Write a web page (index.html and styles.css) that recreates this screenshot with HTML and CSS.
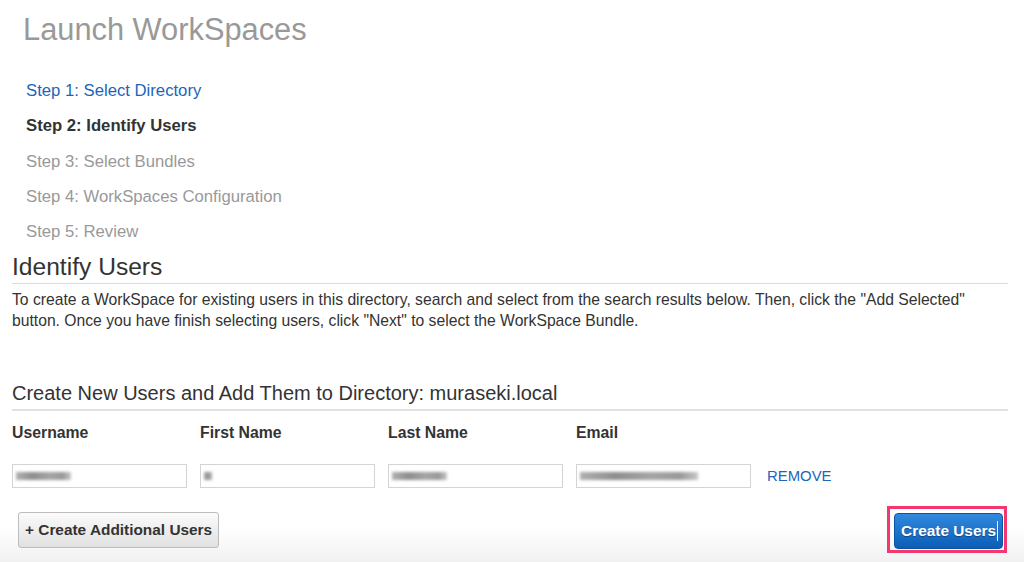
FILE: index.html
```html
<!DOCTYPE html>
<html>
<head>
<meta charset="utf-8">
<link rel="stylesheet" href="styles.css">
</head>
<body>
<div class="page">
  <h1 class="title">Launch WorkSpaces</h1>
  <ul class="steps">
    <li class="step done">Step 1: Select Directory</li>
    <li class="step current">Step 2: Identify Users</li>
    <li class="step">Step 3: Select Bundles</li>
    <li class="step">Step 4: WorkSpaces Configuration</li>
    <li class="step">Step 5: Review</li>
  </ul>
  <div class="section">
    <h2 class="section-title">Identify Users</h2>
    <p class="intro">To create a WorkSpace for existing users in this directory, search and select from the search results below. Then, click the "Add Selected" button. Once you have finish selecting users, click "Next" to select the WorkSpace Bundle.</p>
    <h3 class="sub-title">Create New Users and Add Them to Directory: muraseki.local</h3>
    <div class="grid">
      <div class="col-head">Username</div>
      <div class="col-head">First Name</div>
      <div class="col-head">Last Name</div>
      <div class="col-head">Email</div>
      <div></div>
      <div class="field"><span class="blur b-user"></span></div>
      <div class="field"><span class="blur b-first"></span></div>
      <div class="field"><span class="blur b-last"></span></div>
      <div class="field"><span class="blur b-email"></span></div>
      <a class="remove">REMOVE</a>
    </div>
    <div class="actions">
      <button class="btn-secondary">+ Create Additional Users</button>
      <div class="highlight">
        <button class="btn-primary">Create Users<span class="caret"></span></button>
      </div>
    </div>
  </div>
</div>
</body>
</html>
```
FILE: styles.css
```css
html {
  height: 100%;
}
body {
  margin: 0;
  min-height: 100%;
  font-family: "Liberation Sans", Arial, Helvetica, sans-serif;
  color: #333;
  background: linear-gradient(to bottom, #ffffff 0, #ffffff 528px, #f1f1f1 562px);
}
.page {
  padding-top: 12px;
}
.title {
  margin: 0;
  padding-left: 23px;
  font-size: 30.8px;
  line-height: 36px;
  font-weight: normal;
  color: #999;
}
.steps {
  list-style: none;
  margin: 25px 0 0;
  padding: 0 0 0 26px;
}
.step {
  font-size: 16.7px;
  line-height: 35.3px;
  color: #999;
}
.step.done {
  color: #1a66bb;
}
.step.current {
  color: #333;
  font-weight: bold;
}
.section {
  margin: 0 16px 0 12px;
}
.section-title {
  margin: 4px 0 0;
  font-size: 24.6px;
  line-height: 28px;
  font-weight: normal;
  color: #333;
  padding-bottom: 2px;
  border-bottom: 1px solid #dcdcdc;
}
.intro {
  margin: 5px 0 0;
  font-size: 15.7px;
  line-height: 21px;
  color: #333;
}
.sub-title {
  margin: 50px 0 0;
  font-size: 20px;
  line-height: 24px;
  font-weight: normal;
  color: #333;
  padding-bottom: 4px;
  border-bottom: 2px solid #e1e1e1;
}
.grid {
  display: grid;
  grid-template-columns: 188px 188px 188px 188px auto;
  grid-template-rows: 20px 24px;
  row-gap: 21px;
  margin-top: 12px;
  align-items: center;
}
.col-head {
  font-size: 15.8px;
  font-weight: bold;
  color: #333;
}
.field {
  box-sizing: border-box;
  width: 175px;
  height: 24px;
  border: 1px solid #d4d4d4;
  background: #fff;
  display: flex;
  align-items: center;
  padding-left: 3px;
}
.blur {
  display: block;
  height: 8px;
  background: linear-gradient(to right, #b0b0b0, #8e8e8e 30%, #a5a5a5 60%, #999 85%, #c8c8c8);
  filter: blur(1.5px);
}
.b-user { width: 55px; }
.b-first { width: 8px; }
.b-last { width: 55px; }
.b-email { width: 118px; }
.remove {
  font-size: 14.9px;
  color: #1a66bb;
  padding-left: 3px;
}
.actions {
  display: flex;
  justify-content: space-between;
  align-items: center;
  margin-top: 18px;
  padding-left: 6px;
  margin-right: 1px;
}
.btn-secondary {
  height: 36px;
  padding: 0 6px;
  border: 1px solid #bdbdbd;
  border-radius: 3px;
  background: linear-gradient(to bottom, #fbfbfb, #e1e1e1);
  font-family: "Liberation Sans", Arial, sans-serif;
  font-size: 15.4px;
  font-weight: bold;
  color: #333;
}
.highlight {
  border: 3px solid #f5376f;
  padding: 4px 1px 1px 4px;
  display: flex;
}
.btn-primary {
  height: 36px;
  padding: 0 4px 0 6px;
  border: 1px solid #0b54a4;
  border-radius: 4px;
  background: linear-gradient(to bottom, #3289de, #0b5db6);
  font-family: "Liberation Sans", Arial, sans-serif;
  font-size: 15.4px;
  font-weight: bold;
  color: #fff;
  text-shadow: 0 1px 1px rgba(0, 0, 0, 0.35);
  display: flex;
  align-items: center;
}
.caret {
  display: inline-block;
  width: 1px;
  height: 20px;
  margin-left: 1px;
  background: #e8f0ff;
}
```
